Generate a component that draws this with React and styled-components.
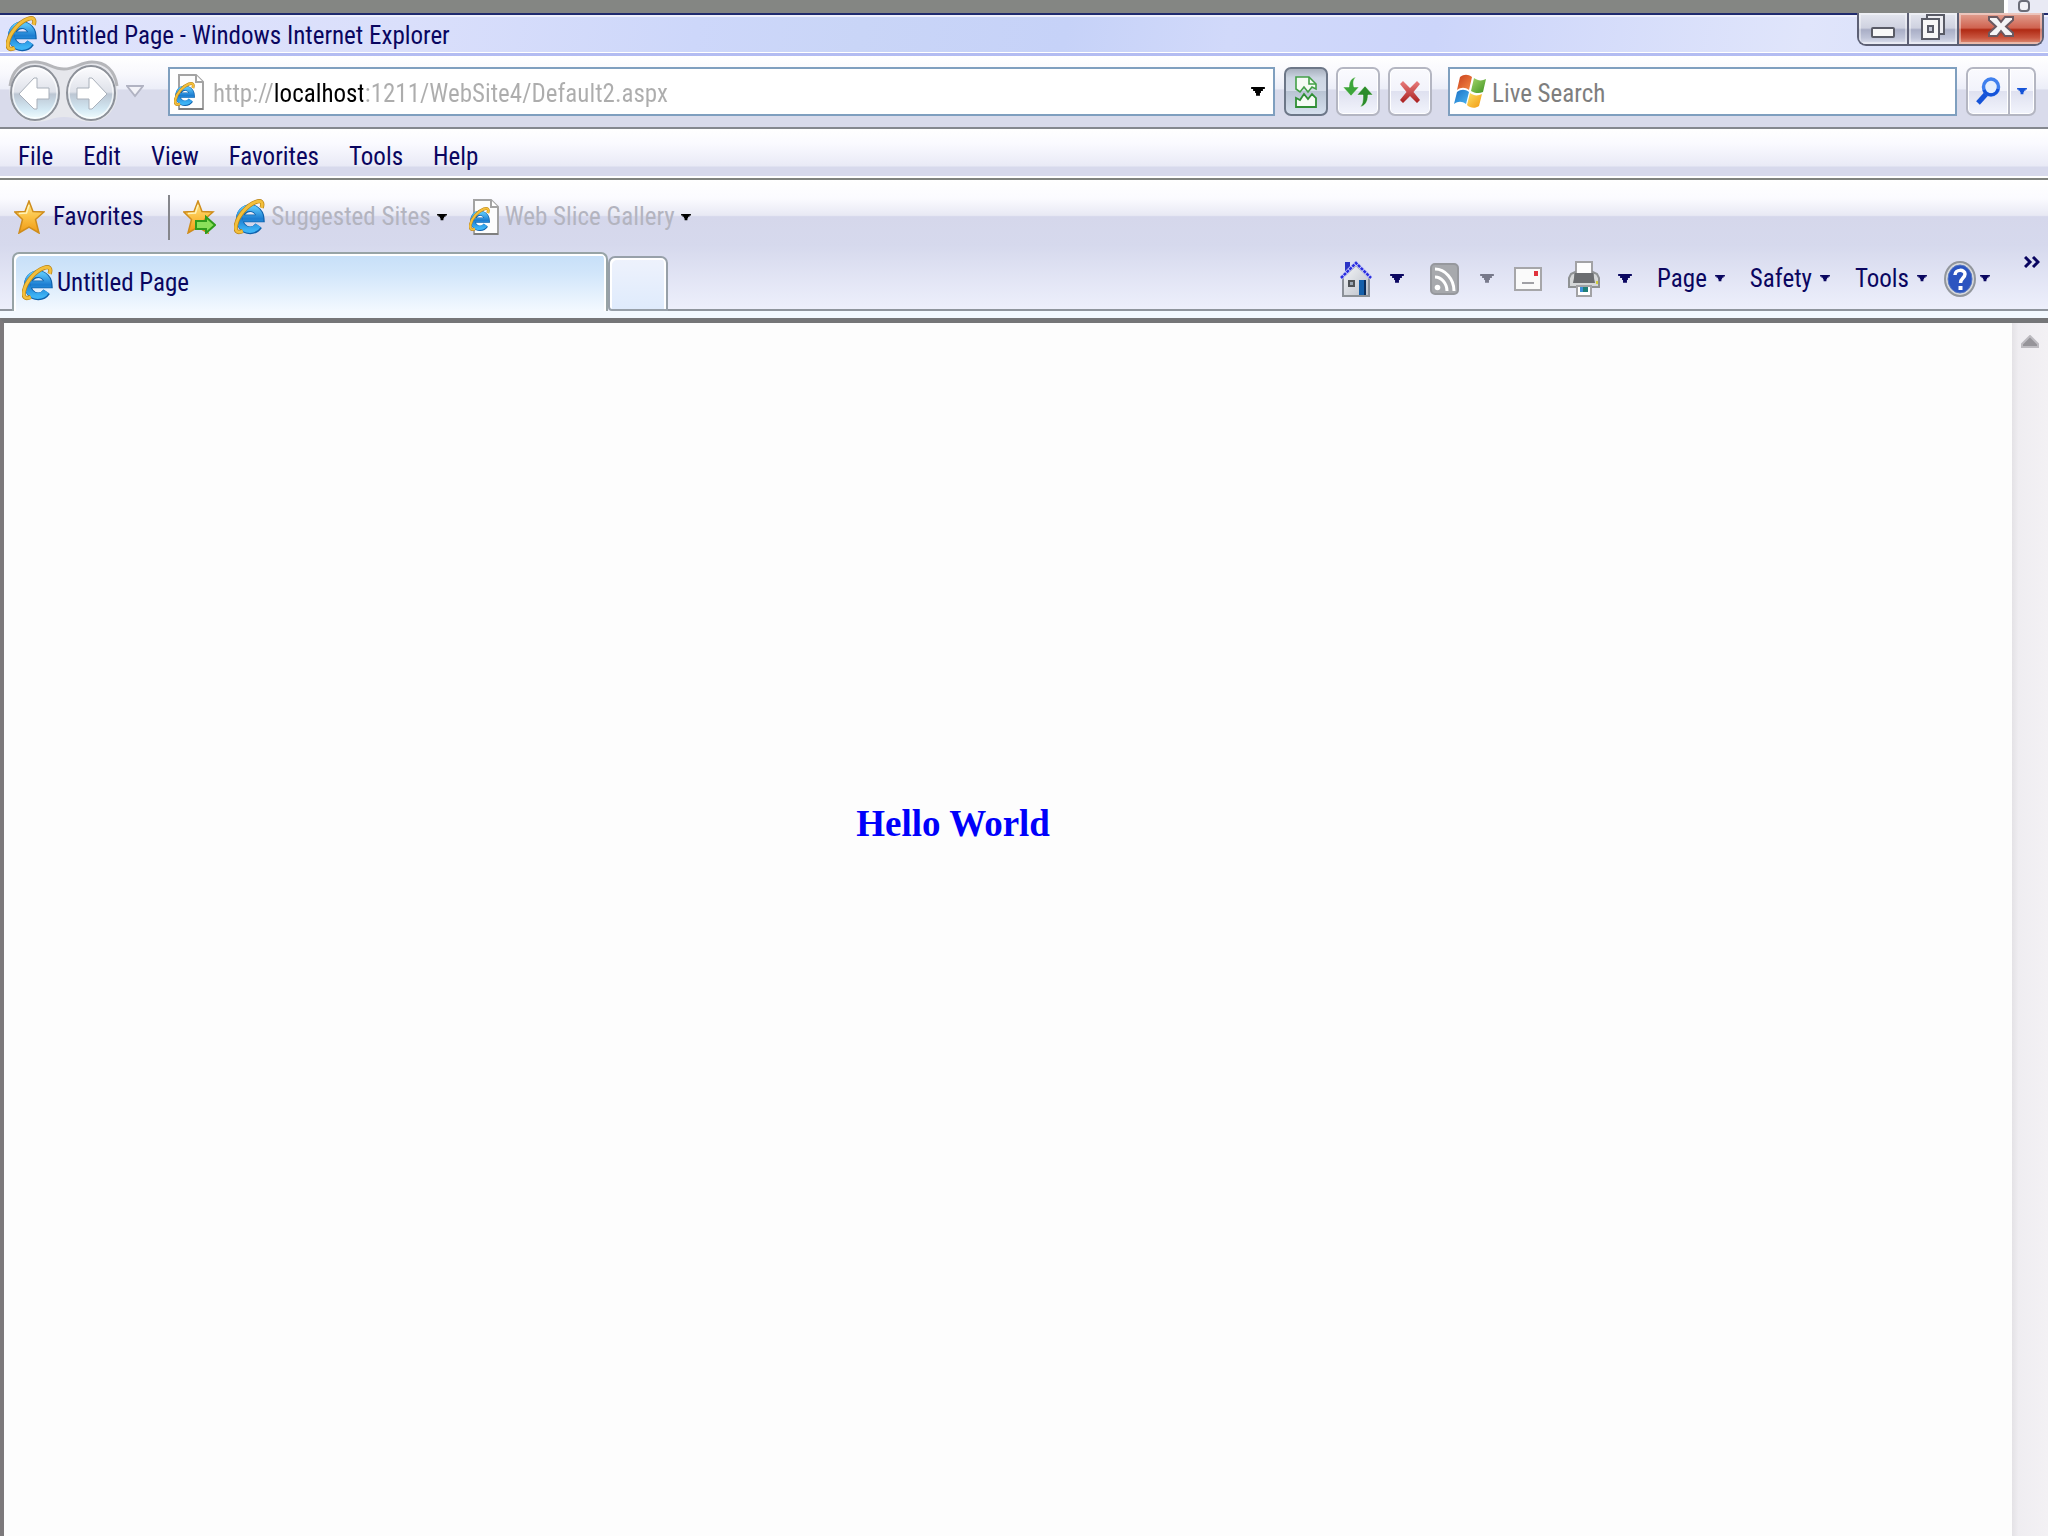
import React from "react";
import styled, { createGlobalStyle } from "styled-components";

const GlobalStyle = createGlobalStyle`
  *, *::before, *::after {
    box-sizing: border-box;
  }

  body {
    margin: 0;
    background: #fdfdfd;
  }

  body, button, input {
    font-family: "Roboto Condensed", "Liberation Sans Narrow", Roboto, sans-serif;
    font-size: 25px;
    line-height: 32px;
    color: #0a0660;
  }

  button {
    margin: 0;
    padding: 0;
    border: 0;
    background: none;
  }

  svg {
    display: block;
    flex: none;
  }
`;

const Window = styled.div`
  display: flex;
  flex-direction: column;
  min-height: 100vh;
`;

const Backdrop = styled.div`
  display: flex;
  justify-content: flex-end;
  height: 13px;
  background: #848683;
`;

const BackdropCorner = styled.div`
  display: flex;
  padding-left: 10px;
  width: 44px;
  border-left: 4px solid #fff;
  background: #e9eaf4;
`;

const TitleBar = styled.header`
  display: flex;
  align-items: center;
  height: 43px;
  padding: 0 4px 0 6px;
  border-top: 2px solid #1f2a6e;
  border-bottom: 3px solid #b3bcf2;
  background: linear-gradient(
    100deg,
    #dfe3fc 0%,
    #dadffb 20%,
    #cdd7fa 34%,
    #c9d5f7 42%,
    #c6d2f8 52%,
    #d1d9fa 60%,
    #ccd5fa 70%,
    #e0e5fb 88%,
    #d5dcf9 100%
  );
  box-shadow: inset 0 2px 0 #eef0fd, inset 0 -1px 0 #fff;
`;

const Title = styled.h1`
  flex: 1;
  margin: 0 0 0 5px;
  padding-top: 4px;
  font-size: 25px;
  font-weight: 400;
`;

const WindowButtons = styled.div`
  display: flex;
  align-self: flex-start;
  height: 33px;
  margin-top: -2px;
  border: 2px solid #5d6075;
  border-top: 0;
  border-radius: 0 0 9px 9px;
  overflow: hidden;
`;

const WindowButton = styled.button`
  display: flex;
  justify-content: center;
  width: ${(props) => (props.$close ? "83px" : "50px")};
  border-right: ${(props) => (props.$close ? "0" : "2px solid #5d6075")};
  background: ${(props) =>
    props.$close
      ? "linear-gradient(#e2a394, #d06350 48%, #b02a14 54%, #c9553f 80%, #e0947c)"
      : "linear-gradient(#e4e6ef, #cfd2e0 48%, #a9aec6 54%, #bfc4d8 80%, #dfe2f0)"};
  box-shadow: inset 0 0 0 2px rgba(255, 255, 255, 0.4);
`;

const NavBar = styled.div`
  display: flex;
  align-items: center;
  height: 73px;
  padding: 0 12px 0 8px;
  border-bottom: 2px solid #85888f;
  background: linear-gradient(#fff, #f8f8fd 25%, #eceef8 46%, #d9dbeb 48%, #d9dbeb);
`;

const History = styled.div`
  position: relative;
  display: flex;
  align-items: center;
  width: 160px;
  height: 64px;
`;

const HistoryShell = styled.svg`
  position: absolute;
  top: 0;
  left: 0;
`;

const HistoryButton = styled.button`
  position: relative;
  width: 56px;
  height: 60px;
`;

const HistoryMenu = styled.button`
  padding: 6px;
`;

const Field = styled.label`
  display: flex;
  align-items: center;
  flex: ${(props) => props.$grow} 1 0;
  min-width: 0;
  height: 49px;
  padding: 0 8px 0 4px;
  border: 2px solid #7f9fbf;
  background: #fff;
`;

const TextInput = styled.input`
  flex: 1;
  min-width: 0;
  margin-left: 5px;
  padding: 4px 0 0;
  border: 0;
  outline: 0;
  background: none;
  color: #7e7e7e;

  &::placeholder {
    color: #7e7e7e;
    opacity: 1;
  }
`;

/* the host part of the address is darker than the rest */
const AddressInput = styled(TextInput)`
  margin-left: 9px;
  color: #adadad;
  background: linear-gradient(90deg, #adadad 61px, #000 61px, #000 150px, #adadad 150px);
  background-clip: text;
  -webkit-text-fill-color: transparent;
`;

const ToolGroup = styled.div`
  display: flex;
  gap: 8px;
  margin: 0 16px 0 9px;
`;

const ToolButton = styled.button`
  display: flex;
  align-items: center;
  justify-content: center;
  width: 44px;
  height: 49px;
  border: 2px solid ${(props) => (props.$pressed ? "#6d7788" : "#b4b6c2")};
  border-radius: 7px;
  background: ${(props) =>
    props.$pressed
      ? "linear-gradient(#a9b1bf, #ccd5e2 20%, #d3dbe8 48%, #b9c4d4 50%, #d6e0ee)"
      : "linear-gradient(#fafafe, #f2f3fb 48%, #dfe1f0 50%, #f2f4fc)"};
  box-shadow: ${(props) => (props.$pressed ? "none" : "inset 0 0 0 1px #fff")};
`;

const SearchButtons = styled.div`
  display: flex;
  margin-left: 9px;

  ${ToolButton}:first-child {
    border-radius: 7px 0 0 7px;
  }

  ${ToolButton}:last-child {
    width: 28px;
    margin-left: -2px;
    border-radius: 0 7px 7px 0;
  }
`;

const MenuBar = styled.nav`
  display: flex;
  align-items: center;
  gap: 30px;
  height: 51px;
  padding: 6px 18px 0;
  border-bottom: 2px solid #80837f;
  background: linear-gradient(#fff, #fafaff 30%, #e9eaf6 75%, #d7d9ec 78%, #d7d9ec 95%, #fff 95%);
`;

const Bands = styled.div`
  background: linear-gradient(#fff, #fbfbff 14%, #e8e9f4 27%, #d5d7eb 28%, #d6d9ed 50%, #eef0fc);
`;

const FavoritesBar = styled.div`
  display: flex;
  align-items: center;
  height: 72px;
  padding: 2px 0 0 14px;
`;

const BarButton = styled.button`
  display: flex;
  align-items: center;
  gap: ${(props) => props.$gap || 8}px;
  color: ${(props) => (props.$muted ? "#b3b4bf" : "#0a0660")};
`;

const Divider = styled.div`
  width: 2px;
  height: 45px;
  margin: 0 13px 0 25px;
  background: #85868c;
`;

const Links = styled.div`
  display: flex;
  gap: 22px;
  margin-left: 18px;
`;

const TabRow = styled.div`
  display: flex;
  align-items: flex-end;
  height: 59px;
`;

const TabGap = styled.div`
  width: 12px;
  height: 100%;
  border-bottom: 2px solid #8f959d;
`;

const ActiveTab = styled.button`
  display: flex;
  align-items: center;
  gap: 4px;
  width: 29.1%;
  height: 59px;
  padding-left: 8px;
  border: 2px solid #97a3a6;
  border-bottom: 0;
  border-radius: 7px 7px 0 0;
  background: linear-gradient(#c6dff8, #d2e6fa 35%, #f3f9ff);
  box-shadow: inset 2px 2px 0 #fff, inset -2px 0 0 #fff;
`;

const NewTab = styled.button`
  width: 60px;
  height: 55px;
  border: 2px solid #97a0a9;
  border-radius: 7px 7px 0 4px;
  background: linear-gradient(#eef2fc, #dfebfc);
  box-shadow: inset 2px 2px 0 #fff, inset -2px 0 0 #fff;
`;

const CommandBar = styled.div`
  display: flex;
  align-items: center;
  justify-content: flex-end;
  flex: 1;
  height: 100%;
  padding: 0 8px 4px 0;
  border-bottom: 2px solid #8f959d;
`;

const Command = styled(BarButton)`
  margin-right: ${(props) => props.$space}px;
`;

const More = styled.button`
  align-self: flex-start;
  padding-top: 4px;
`;

const TabFoot = styled.div`
  height: 7px;
  background: #f3f9ff;
`;

const Viewport = styled.div`
  display: flex;
  flex: 1;
  border-top: 5px solid #757678;
  border-left: 4px solid #7c797b;
`;

const Page = styled.main`
  flex: 1;
  padding: 481px 0 0 41.7%;
  background: #fdfdfd;
`;

const Greeting = styled.p`
  margin: 0;
  font: bold 37px/40px "Liberation Serif", serif;
  color: #0000fa;
`;

const ScrollBar = styled.div`
  display: flex;
  align-items: flex-start;
  justify-content: center;
  width: 36px;
  padding-top: 12px;
  background: linear-gradient(90deg, #e4e2e6, #efedf1 18%, #f3f1f4);
`;

const Arrow = ({ width = 10, color = "#0a0660" }) => (
  <svg width={width} height={width * 0.7} viewBox="0 0 14 10" aria-hidden="true">
    <path d="M0 0H14V2H12V4H10V6H9V9H5V6H4V4H2V2H0Z" fill={color} />
  </svg>
);

const RingedE = () => (
  <>
    <path
      d="M9 20H27.500A10.800 11.400 0 1 0 25.500 27.500"
      fill="none"
      stroke="#0f62ad"
      strokeWidth="8"
    />
    <path
      d="M9 20H27A10.800 11.400 0 1 0 25 27"
      fill="none"
      stroke="url(#ie-blue)"
      strokeWidth="6.500"
    />
    <path
      d="M28.500 9C30.500 3 28 1 22.500 3C14 6 4 17 2 27C1 33 3 35.500 9 33"
      fill="none"
      stroke="#b98416"
      strokeWidth="4.500"
    />
    <path
      d="M28.500 9C30.500 3 28 1 22.500 3C14 6 4 17 2 27C1 33 3 35.500 9 33"
      fill="none"
      stroke="#f3bf3c"
      strokeWidth="3"
    />
  </>
);

const ExplorerIcon = () => (
  <svg width="31" height="36" viewBox="0 0 32 37" aria-hidden="true">
    <defs>
      <linearGradient id="ie-blue" x1="0" y1="0" x2="0" y2="1">
        <stop offset="0" stopColor="#58c3f8" />
        <stop offset="0.5" stopColor="#1c7cd0" />
        <stop offset="1" stopColor="#3db3f5" />
      </linearGradient>
    </defs>
    <RingedE />
  </svg>
);

const PageIcon = () => (
  <svg width="30" height="36" viewBox="0 0 30 36" aria-hidden="true">
    <path d="M5 1H22L29 8V35H5Z" fill="#fdfdfd" stroke="#a3a3a3" strokeWidth="2" />
    <path d="M22 1V8H29" fill="#fff" stroke="#a3a3a3" strokeWidth="2" />
    <path d="M5 35H29" stroke="#7f7f7f" strokeWidth="2" />
    <g transform="translate(0 8) scale(0.66)">
      <RingedE />
    </g>
  </svg>
);

const starPath = "M15 1L19 11.500L30 12L21.500 19.500L25 33L15 27L5 33L8.500 19.500L0.800 12L11 11.500Z";

const StarIcon = ({ add }) => (
  <svg width={add ? 33 : 31} height="34" viewBox={add ? "0 0 33 34" : "0 0 31 34"} aria-hidden="true">
    <defs>
      <linearGradient id="star-gold" x1="0" y1="0" x2="0" y2="1">
        <stop offset="0" stopColor="#ffe88c" />
        <stop offset="0.5" stopColor="#fbc144" />
        <stop offset="1" stopColor="#f09a14" />
      </linearGradient>
    </defs>
    <path d={starPath} fill="url(#star-gold)" stroke="#cf8d1c" strokeWidth="1.500" />
    <path d="M15 5L12.500 13L5 13.500" fill="none" stroke="#fff3b8" strokeWidth="1.500" />
    {add && (
      <path
        d="M13 21H23V17L32 25L23 33V29H13Z"
        fill="#8be05b"
        stroke="#2f9c1c"
        strokeWidth="2"
      />
    )}
  </svg>
);

const MinimizeIcon = () => (
  <svg width="24" height="33" viewBox="0 0 24 33" aria-hidden="true">
    <rect x="1" y="15" width="22" height="9" rx="1" fill="#f8f8f8" stroke="#595b66" strokeWidth="2" />
  </svg>
);

const RestoreIcon = () => (
  <svg width="24" height="33" viewBox="0 0 24 33" aria-hidden="true">
    <path d="M6 2H23V21H6Z" fill="#ededf2" stroke="#595b66" strokeWidth="2" />
    <path d="M1 6H18V26H1Z" fill="#f8f8f8" stroke="#595b66" strokeWidth="2" />
    <path d="M7 13H12V19H7Z" fill="#c9ccda" stroke="#595b66" strokeWidth="2" />
  </svg>
);

const CloseIcon = () => (
  <svg width="26" height="33" viewBox="0 0 26 33" aria-hidden="true">
    <path
      d="M1 4H9L13 9L17 4H25V7L18 13.500L25 20V23H17L13 18L9 23H1V20L8 13.500L1 7Z"
      fill="#f4f4f6"
      stroke="#6a5961"
      strokeWidth="2"
    />
  </svg>
);

const HistoryArrow = ({ forward }) => (
  <svg width="56" height="60" viewBox="0 0 56 60" aria-hidden="true">
    <defs>
      <linearGradient id="orb" x1="0" y1="0" x2="0" y2="1">
        <stop offset="0" stopColor="#fdfdff" />
        <stop offset="0.480" stopColor="#dfe2ea" />
        <stop offset="0.520" stopColor="#bcc6d3" />
        <stop offset="0.800" stopColor="#d3e8f3" />
        <stop offset="1" stopColor="#f5ffff" />
      </linearGradient>
    </defs>
    <ellipse cx="27" cy="31" rx="24" ry="27" fill="url(#orb)" stroke="#8d9199" strokeWidth="2" />
    <ellipse cx="27" cy="31" rx="22" ry="25" fill="none" stroke="#fff" strokeWidth="1.500" opacity="0.7" />
    <path
      transform={forward ? "translate(54 0) scale(-1 1)" : undefined}
      d="M11 32L26 16H29V26H41V37H29V47H26Z"
      fill="#fff"
      stroke="#a9b0ba"
      strokeWidth="1"
    />
  </svg>
);

const CompatIcon = () => (
  <svg width="24" height="32" viewBox="0 0 24 32" aria-hidden="true">
    <path
      d="M2 13V1H15L22 8V13L18 11L14 16L10 11L6 16Z"
      fill="#f5fbf5"
      stroke="#43a047"
      strokeWidth="1.600"
    />
    <path d="M15 1V8H22" fill="none" stroke="#43a047" strokeWidth="1.600" />
    <path
      d="M2 31V22L6 24L10 18L14 23L18 18L22 22V31Z"
      fill="#f5fbf5"
      stroke="#2f8f35"
      strokeWidth="1.800"
    />
  </svg>
);

const RefreshIcon = () => (
  <svg width="30" height="32" viewBox="0 0 30 32" aria-hidden="true">
    <path d="M13 1C8 2 6 6 6 11H0L8 20L16 11H11C10 7 10 4 13 1Z" fill="#3ca53a" stroke="#fff" strokeWidth="0.500" />
    <path d="M17 31C22 30 25 26 25 19H30L22 10L14 19H20C20 24 20 28 17 31Z" fill="#2b8c2a" stroke="#fff" strokeWidth="0.500" />
  </svg>
);

const StopIcon = () => (
  <svg width="24" height="26" viewBox="0 0 24 26" aria-hidden="true">
    <defs>
      <linearGradient id="stop-red" x1="0" y1="0" x2="0" y2="1">
        <stop offset="0" stopColor="#ea7d7d" />
        <stop offset="1" stopColor="#a81f1f" />
      </linearGradient>
    </defs>
    <path
      d="M2 5L5 2L12 9L19 2L22 5L15.500 13L22 21L19 24L12 17L5 24L2 21L8.500 13Z"
      fill="url(#stop-red)"
    />
  </svg>
);

const FlagIcon = () => (
  <svg width="33" height="35" viewBox="0 0 33 35" aria-hidden="true">
    <defs>
      <linearGradient id="flag-red" x1="0" y1="0" x2="1" y2="1">
        <stop offset="0" stopColor="#c9401c" />
        <stop offset="1" stopColor="#f58a45" />
      </linearGradient>
      <linearGradient id="flag-green" x1="0" y1="0" x2="1" y2="1">
        <stop offset="0" stopColor="#a5d66a" />
        <stop offset="1" stopColor="#3f9423" />
      </linearGradient>
      <linearGradient id="flag-blue" x1="0" y1="0" x2="1" y2="1">
        <stop offset="0" stopColor="#1a6fc4" />
        <stop offset="1" stopColor="#4cb6f2" />
      </linearGradient>
      <linearGradient id="flag-yellow" x1="0" y1="0" x2="1" y2="1">
        <stop offset="0" stopColor="#fde067" />
        <stop offset="1" stopColor="#f2990f" />
      </linearGradient>
    </defs>
    <path d="M6 3C10 0 14 0 18 3L15 16C11 13 7 13 3 16Z" fill="url(#flag-red)" />
    <path d="M20 4C24 7 28 7 32 5L29 18C25 20 20 19 17 17Z" fill="url(#flag-green)" />
    <path d="M3 18C7 15 11 15 15 18L12 30C8 27 4 27 0 30Z" fill="url(#flag-blue)" />
    <path d="M16 19C20 22 24 22 28 20L25 32C21 35 16 34 13 31Z" fill="url(#flag-yellow)" />
  </svg>
);

const SearchIcon = () => (
  <svg width="26" height="30" viewBox="0 0 26 30" aria-hidden="true">
    <path d="M12 16L3 26" stroke="#1553d8" strokeWidth="5" />
    <ellipse cx="16" cy="10" rx="7.500" ry="8" fill="#e5effd" stroke="#3f80ee" strokeWidth="3.500" />
    <path d="M9 13C11 19 21 20 23 12" fill="none" stroke="#1553d8" strokeWidth="3" />
  </svg>
);

const HomeIcon = () => (
  <svg width="32" height="36" viewBox="0 0 32 36" aria-hidden="true">
    <defs>
      <linearGradient id="wall" x1="0" y1="0" x2="1" y2="1">
        <stop offset="0" stopColor="#f6f7f9" />
        <stop offset="1" stopColor="#b9bec8" />
      </linearGradient>
    </defs>
    <path d="M3 16L16 4L29 16V35H3Z" fill="url(#wall)" stroke="#8b9099" strokeWidth="2" />
    <path d="M5 1H10V8L5 13Z" fill="#2a33c5" />
    <path d="M1 17L16 2L31 17" fill="none" stroke="#c9cdf5" strokeWidth="4" />
    <path d="M1 17L16 2L31 17" fill="none" stroke="#2b2ee0" strokeWidth="2.500" strokeDasharray="3 1" />
    <path d="M9 20H14V25H9Z" fill="#9aa6b3" stroke="#4f5357" strokeWidth="2" />
    <path d="M19 19H24V35H19Z" fill="#1560ab" />
    <path d="M24 19H26V35H24Z" fill="#0c2e5c" />
    <path d="M3 35H29" stroke="#8c9197" strokeWidth="2" />
  </svg>
);

const FeedIcon = () => (
  <svg width="29" height="32" viewBox="0 0 29 32" aria-hidden="true">
    <rect x="1" y="1" width="27" height="30" rx="4" fill="#a7a9ad" stroke="#96989d" strokeWidth="2" />
    <circle cx="7.500" cy="24.500" r="2.800" fill="#fff" />
    <path d="M5 14C11 14 17 20 17 28M5 6C15 6 24 16 24 28" fill="none" stroke="#fff" strokeWidth="3" />
  </svg>
);

const MailIcon = () => (
  <svg width="28" height="24" viewBox="0 0 28 24" aria-hidden="true">
    <rect x="1" y="1" width="26" height="22" fill="#fafafa" stroke="#a6a6a9" strokeWidth="2" />
    <path d="M20 4H24V9H20Z" fill="#e0333d" />
    <path d="M8 16H20" stroke="#a0a0a5" strokeWidth="2" />
  </svg>
);

const PrinterIcon = () => (
  <svg width="32" height="36" viewBox="0 0 32 36" aria-hidden="true">
    <path d="M8 1H24V14H8Z" fill="#fdfdfd" stroke="#a2a2a5" strokeWidth="2" />
    <path d="M3 13L7 11V20H25V11L29 13L31 17V26H1V17Z" fill="#d5d7d8" stroke="#8f9294" strokeWidth="2" />
    <path d="M7 12H25L27 22H5Z" fill="#6b6d70" />
    <path d="M28 20H30V23H28Z" fill="#d3cf3b" />
    <path d="M9 25H23V35H9Z" fill="#fff" stroke="#a2a2a5" strokeWidth="2" />
    <path d="M12 26H15V31H12Z" fill="#3c8fd9" />
    <path d="M15 26H20V31H15Z" fill="#1f7f78" />
  </svg>
);

const HelpIcon = () => (
  <svg width="32" height="36" viewBox="0 0 32 36" aria-hidden="true">
    <ellipse cx="16" cy="18" rx="15" ry="17" fill="#d7d9dc" stroke="#92969c" strokeWidth="2" />
    <ellipse cx="16" cy="18" rx="12" ry="14" fill="#2c55c0" stroke="#5878c5" strokeWidth="1" />
    <path
      d="M11 14C11 8 21 8 21 13C21 17 16.500 17 16.500 22"
      fill="none"
      stroke="#fff"
      strokeWidth="3.500"
    />
    <path d="M14.500 25H18.500V29H14.500Z" fill="#fff" />
  </svg>
);

const MoreIcon = () => (
  <svg width="16" height="12" viewBox="0 0 16 12" aria-hidden="true">
    <path d="M1 1L6 6L1 11M9 1L14 6L9 11" fill="none" stroke="#0a0660" strokeWidth="3" />
  </svg>
);

const menus = ["File", "Edit", "View", "Favorites", "Tools", "Help"];

const App = () => {
  return (
    <Window>
      <GlobalStyle />
      <Backdrop>
        <BackdropCorner>
          <svg width="12" height="13" viewBox="0 0 12 13" aria-hidden="true">
            <rect x="1" y="1" width="10" height="10" rx="3" fill="#f3f3f8" stroke="#6b6d78" strokeWidth="2" />
          </svg>
        </BackdropCorner>
      </Backdrop>

      <TitleBar>
        <ExplorerIcon />
        <Title>Untitled Page - Windows Internet Explorer</Title>
        <WindowButtons>
          <WindowButton aria-label="Minimize">
            <MinimizeIcon />
          </WindowButton>
          <WindowButton aria-label="Restore">
            <RestoreIcon />
          </WindowButton>
          <WindowButton $close aria-label="Close">
            <CloseIcon />
          </WindowButton>
        </WindowButtons>
      </TitleBar>

      <NavBar>
        <History>
          <HistoryShell width="112" height="64" viewBox="0 0 112 64" aria-hidden="true">
            <path
              d="M27 2C40 2 44 9 56 9C68 9 72 2 84 2C118 6 118 58 84 62C72 62 68 57 56 57C44 57 40 62 27 62C-7 58 -7 6 27 2Z"
              fill="#e6e7ec"
            />
            <path
              d="M2 26C4 10 14 2 27 2C40 2 44 9 56 9C68 9 72 2 84 2C97 2 107 10 109 26"
              fill="none"
              stroke="#b5b6ba"
              strokeWidth="3"
            />
          </HistoryShell>
          <HistoryButton aria-label="Back">
            <HistoryArrow />
          </HistoryButton>
          <HistoryButton aria-label="Forward">
            <HistoryArrow forward />
          </HistoryButton>
          <HistoryMenu aria-label="Recent pages">
            <svg width="18" height="13" viewBox="0 0 18 13" aria-hidden="true">
              <path d="M1 1H17L9 11Z" fill="#f3f3f8" stroke="#b1b3c2" strokeWidth="2" />
            </svg>
          </HistoryMenu>
        </History>

        <Field $grow={1091}>
          <PageIcon />
          <AddressInput
            aria-label="Address"
            defaultValue="http://localhost:1211/WebSite4/Default2.aspx"
          />
          <Arrow width={14} color="#000" />
        </Field>
        <ToolGroup>
          <ToolButton $pressed aria-label="Compatibility View">
            <CompatIcon />
          </ToolButton>
          <ToolButton aria-label="Refresh">
            <RefreshIcon />
          </ToolButton>
          <ToolButton aria-label="Stop">
            <StopIcon />
          </ToolButton>
        </ToolGroup>
        <Field $grow={493}>
          <FlagIcon />
          <TextInput aria-label="Live Search" placeholder="Live Search" />
        </Field>
        <SearchButtons>
          <ToolButton aria-label="Search">
            <SearchIcon />
          </ToolButton>
          <ToolButton aria-label="Search options">
            <Arrow color="#1553d8" />
          </ToolButton>
        </SearchButtons>
      </NavBar>

      <MenuBar>
        {menus.map((menu) => (
          <BarButton key={menu}>{menu}</BarButton>
        ))}
      </MenuBar>

      <Bands>
        <FavoritesBar>
          <BarButton>
            <StarIcon />
            Favorites
          </BarButton>
          <Divider />
          <BarButton aria-label="Add to Favorites Bar">
            <StarIcon add />
          </BarButton>
          <Links>
            <BarButton $muted $gap={6}>
              <ExplorerIcon />
              Suggested Sites
              <Arrow color="#000" />
            </BarButton>
            <BarButton $muted $gap={6}>
              <PageIcon />
              Web Slice Gallery
              <Arrow color="#000" />
            </BarButton>
          </Links>
        </FavoritesBar>

        <TabRow>
          <TabGap />
          <ActiveTab>
            <ExplorerIcon />
            Untitled Page
          </ActiveTab>
          <NewTab aria-label="New Tab" />
          <CommandBar>
            <Command $gap={18} $space={26} aria-label="Home">
              <HomeIcon />
              <Arrow width={14} />
            </Command>
            <Command $gap={21} $space={20} aria-label="Feeds">
              <FeedIcon />
              <Arrow width={14} color="#77798a" />
            </Command>
            <Command $space={26} aria-label="Read Mail">
              <MailIcon />
            </Command>
            <Command $gap={18} $space={25} aria-label="Print">
              <PrinterIcon />
              <Arrow width={14} />
            </Command>
            <Command $space={25}>
              Page
              <Arrow />
            </Command>
            <Command $space={25}>
              Safety
              <Arrow />
            </Command>
            <Command $space={17}>
              Tools
              <Arrow />
            </Command>
            <Command $gap={4} $space={34} aria-label="Help">
              <HelpIcon />
              <Arrow />
            </Command>
            <More aria-label="More commands">
              <MoreIcon />
            </More>
          </CommandBar>
        </TabRow>
      </Bands>
      <TabFoot />

      <Viewport>
        <Page>
          <Greeting>Hello World</Greeting>
        </Page>
        <ScrollBar>
          <svg width="20" height="14" viewBox="0 0 20 14" aria-hidden="true">
            <path d="M10 1L18 9V12H2V9Z" fill="#969499" stroke="#bdbbc0" strokeWidth="2" />
          </svg>
        </ScrollBar>
      </Viewport>
    </Window>
  );
};

export default App;
